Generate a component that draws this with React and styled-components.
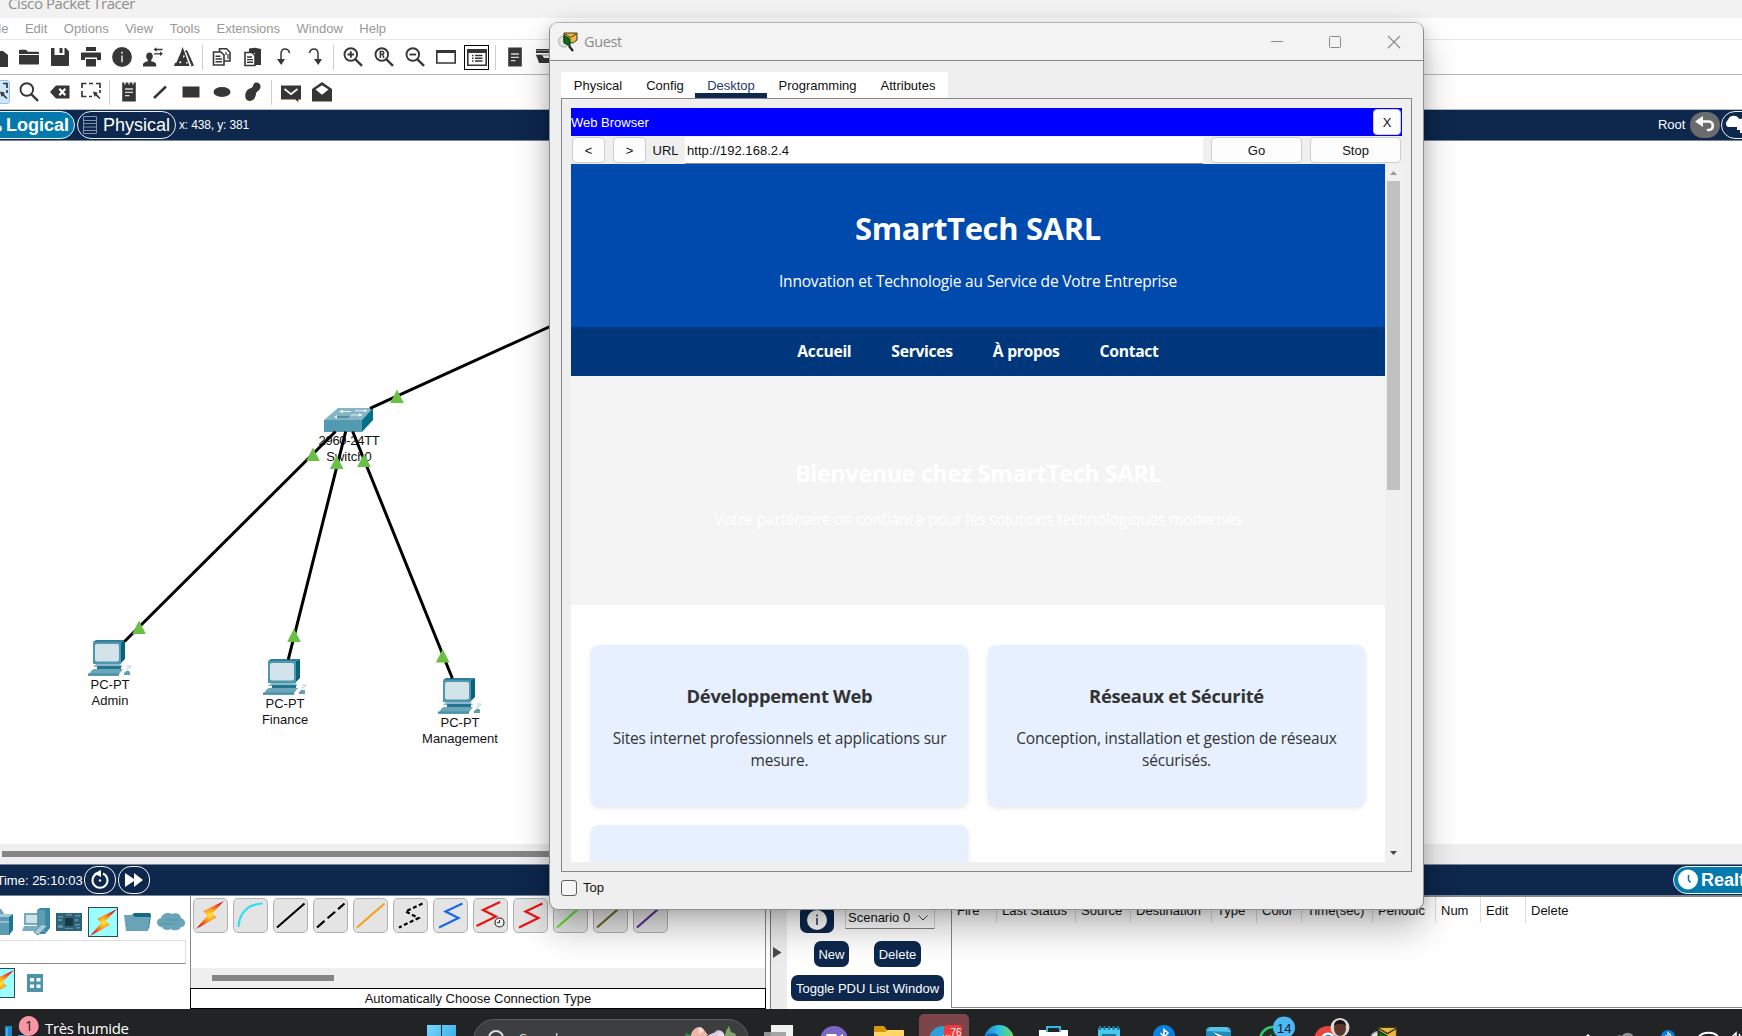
import React from "react";
import styled, { createGlobalStyle } from "styled-components";

const Global = createGlobalStyle`
  * { box-sizing: border-box; }
  html, body { margin: 0; padding: 0; overflow: hidden; background: #fff; }
  svg { display: block; flex: none; overflow: visible; }
`;

const ui = `"Liberation Sans", Arial, sans-serif`;
const segoe = `"Open Sans", "Noto Sans", sans-serif`;
const navy = "#0d274d";

const Desktop = styled.div`
  position: relative;
  width: 1742px;
  height: 1036px;
  overflow: hidden;
  display: flex;
  flex-direction: column;
  font: 13px/16px ${ui};
  color: #111;
  background: #fff;
`;

/* ---------- main window chrome ---------- */
const MainTitle = styled.div`
  height: 18px;
  flex: none;
  padding-left: 8px;
  background: #f2f2f2;
  overflow: hidden;
  font: 15px/7px ${segoe};
  letter-spacing: -0.42px;
  color: #8e8e8e;
  white-space: nowrap;
`;
const MenuBar = styled.div`
  height: 22px;
  flex: none;
  display: flex;
  align-items: center;
  gap: 16.5px;
  padding-top: 1px;
  margin-left: -12.5px;
  border-bottom: 1px solid #e8e8e8;
  color: #989898;
`;
const Strip = styled.div`
  height: 35px;
  flex: none;
  display: flex;
  align-items: center;
  margin-left: -18px;
  border-bottom: 1px solid #b9b9b9;
`;
const Tool = styled.div`
  width: 31px;
  height: 25px;
  flex: none;
  display: flex;
  align-items: center;
  justify-content: center;
  color: #363636;
`;
const Framed = styled.div`
  width: 25px;
  height: 25px;
  border: 1px solid #000;
  display: flex;
  align-items: center;
  justify-content: center;
`;
const Selected = styled.div`
  width: 25px;
  height: 24px;
  border: 1px solid #8fc6ee;
  border-radius: 3px;
  background: #cfe6fb;
  display: flex;
  align-items: center;
  justify-content: center;
`;
const Sep = styled.div`
  width: 4px;
  height: 25px;
  flex: none;
  border-right: 1px solid #cfcfcf;
  margin-right: 3px;
`;
const NavyBar = styled.div`
  height: ${(p) => p.$h}px;
  flex: none;
  display: flex;
  align-items: center;
  justify-content: space-between;
  background: ${navy};
  border-bottom: 1px solid #7b8494;
  color: #fff;
  white-space: nowrap;
`;
const BarGroup = styled.div`
  display: flex;
  align-items: center;
  gap: ${(p) => p.$gap || 2}px;
`;
const ModeTab = styled.div`
  height: 28px;
  width: ${(p) => p.$w}px;
  margin-left: ${(p) => p.$ml || 0}px;
  margin-right: ${(p) => p.$mr || 0}px;
  padding: 0 5px;
  display: flex;
  align-items: center;
  justify-content: ${(p) => p.$align || "flex-end"};
  gap: ${(p) => p.$gap ?? 6}px;
  border: 1px solid #e8f2f8;
  border-radius: 14px;
  background: ${(p) => (p.$on ? "#0379ac" : navy)};
  font-size: 18px;
  font-weight: ${(p) => (p.$on ? 700 : 400)};
  flex: none;
`;
const Coords = styled.span`
  font-size: 12px;
  letter-spacing: -0.15px;
  margin-left: 1px;
`;
const Clock = styled.span`
  margin-left: -3.5px;
  padding-top: 1px;
`;
const RoundBtn = styled.div`
  width: ${(p) => p.$w || 32}px;
  height: ${(p) => p.$h || 28}px;
  border-radius: 13px;
  border: ${(p) => (p.$gray ? "none" : "1px solid #f2f5f8")};
  background: ${(p) => (p.$gray ? "#6c6c6c" : "transparent")};
  display: flex;
  align-items: center;
  justify-content: center;
  flex: none;
`;

/* ---------- topology canvas ---------- */
const Canvas = styled.div`
  position: relative;
  height: 703px;
  flex: none;
  background: #fff;
`;
const Links = styled.svg`
  position: absolute;
  left: 0;
  top: 0;
`;
const Device = styled.div`
  position: absolute;
  left: ${(p) => p.$x}px;
  top: ${(p) => p.$y}px;
  width: 100px;
  display: flex;
  flex-direction: column;
  align-items: center;
  text-align: center;
  white-space: nowrap;
`;
const Model = styled.span`
  margin-top: 1px;
  letter-spacing: ${(p) => p.$ls || 0}px;
`;
const CanvasScroll = styled.div`
  height: 21px;
  flex: none;
  background: #efefef;
  border-bottom: 1px solid #7b8494;
  padding: 7px 0 0 2px;
`;
const Thumb = styled.div`
  width: ${(p) => p.$w}px;
  height: 6px;
  background: #858585;
`;

/* ---------- bottom panels ---------- */
const Bottom = styled.div`
  height: 113px;
  flex: none;
  display: flex;
  background: #fff;
`;
const Categories = styled.div`
  width: 190px;
  display: flex;
  flex-direction: column;
  overflow: hidden;
`;
const CatRow = styled.div`
  display: flex;
  align-items: center;
  height: 30px;
  margin-top: ${(p) => p.$mt}px;
  gap: ${(p) => p.$gap}px;
  margin-left: ${(p) => p.$ml}px;
`;
const Bolt = styled.div`
  width: 30px;
  height: 30px;
  background: #9cffff;
  border: 1px solid #2f4b55;
  display: flex;
  align-items: center;
  justify-content: center;
  flex: none;
`;
const Field = styled.div`
  height: 24px;
  width: 186px;
  margin-top: 3px;
  border: 1px solid #dedede;
  border-left: 0;
  border-bottom-color: #8d8d8d;
`;
const Connections = styled.div`
  width: 576px;
  display: flex;
  flex-direction: column;
  border-left: 1px solid #84878c;
  border-right: 1px solid #84878c;
`;
const ConnRow = styled.div`
  display: flex;
  gap: 5px;
  padding: 2px 0 0 2px;
  height: 72px;
`;
const ConnBtn = styled.div`
  width: 35px;
  height: 35px;
  border: 1px solid #b1b1b1;
  border-radius: 5px;
  background: #e4e4e4;
`;
const ConnScroll = styled.div`
  height: 20px;
  background: #efefef;
  padding: 7px 0 0 21px;
`;
const ConnLabel = styled.div`
  height: 21px;
  margin: 0 -1px;
  padding-top: 1px;
  border: 1px solid #000;
  display: flex;
  align-items: center;
  justify-content: center;
  background: #fff;
`;
const Splitter = styled.div`
  width: 17px;
  margin-left: 4px;
  border-left: 1px solid #77797c;
  background: #ececec;
  display: flex;
  align-items: center;
  padding-left: 2px;
`;
const Pdu = styled.div`
  width: 164px;
  padding: 9px 0 0 4px;
  display: flex;
  flex-direction: column;
`;
const PduRow = styled.div`
  display: flex;
  align-items: center;
  gap: ${(p) => p.$gap}px;
  padding-left: ${(p) => p.$pl}px;
  margin-bottom: 8px;
  height: ${(p) => p.$h || 26}px;
`;
const PduBtn = styled.div`
  width: ${(p) => p.$w}px;
  height: ${(p) => p.$h || 26}px;
  padding-top: 1px;
  border-radius: 7px;
  background: ${navy};
  color: #fff;
  display: flex;
  align-items: center;
  justify-content: center;
  white-space: nowrap;
`;
const Combo = styled.div`
  width: 90px;
  height: 24px;
  margin-top: -4px;
  padding: 2px 6px 0 2px;
  border: 1px solid #d5d5d5;
  border-bottom-color: #858585;
  background: #fff;
  display: flex;
  align-items: center;
  justify-content: space-between;
  white-space: nowrap;
`;
const PduTable = styled.div`
  flex: 1;
  border: 1px solid #84878c;
  border-width: 1px 0 1px 1px;
  margin-bottom: 1px;
  display: flex;
  align-items: flex-start;
`;
const Th = styled.div`
  width: ${(p) => p.$w}px;
  height: 26px;
  padding: 6px 0 0 5px;
  border-right: ${(p) => (p.$last ? 0 : 1)}px solid #dcdcdc;
  white-space: nowrap;
  flex: none;
`;

/* ---------- taskbar ---------- */
const Taskbar = styled.div`
  position: relative;
  z-index: 5;
  height: 27px;
  flex: none;
  overflow: hidden;
  background: #212325;
`;
const TaskRow = styled.div`
  height: 61px;
  display: flex;
  align-items: center;
  color: #fff;
`;
const Weather = styled.div`
  width: 427px;
  height: 61px;
  padding: 10px 0 0 4px;
  display: flex;
  align-items: flex-start;
  font: 15px/19px ${segoe};
  letter-spacing: -0.35px;
`;
const WeatherText = styled.span`
  margin-left: 6px;
`;
const SearchPill = styled.div`
  width: 276px;
  height: 42px;
  margin: 0 2px 0 17px;
  padding: 0 10px 0 14px;
  border-radius: 21px;
  background: #3c3e40;
  border: 1px solid #5b5d5f;
  display: flex;
  align-items: center;
  font: 15px/20px ${segoe};
  letter-spacing: -0.5px;
  color: #d5d5d5;
`;
const SearchText = styled.span`
  flex: 1;
  margin: -4px 0 0 15px;
`;
const Slot = styled.div`
  width: 55px;
  display: flex;
  justify-content: center;
  flex: none;
`;
const ActiveSlot = styled.div`
  width: 50px;
  height: 51px;
  border-radius: 5px;
  background: #7c454a;
  display: flex;
  align-items: center;
  justify-content: center;
`;
const Tray = styled.div`
  width: 160px;
  margin-left: auto;
  display: flex;
  align-items: center;
`;

/* ---------- guest window ---------- */
const Win = styled.div`
  position: absolute;
  left: 549px;
  top: 22px;
  width: 875px;
  height: 888px;
  border: 1px solid #8b8d90;
  border-top-color: #b4b4b4;
  border-radius: 9px;
  background: #efefef;
  display: flex;
  flex-direction: column;
  box-shadow: 0 18px 36px rgba(0, 0, 0, 0.27), 0 2px 14px rgba(0, 0, 0, 0.15);
`;
const WinTitle = styled.div`
  height: 38px;
  flex: none;
  display: flex;
  align-items: center;
  padding: 0 23px 0 8px;
  border-radius: 8px 8px 0 0;
  background: #f3f3f3;
  border-bottom: 1px solid #84878c;
`;
const WinName = styled.div`
  flex: 1;
  margin-left: 6px;
  font: 14.5px/20px ${segoe};
  letter-spacing: -0.35px;
  color: #8c8c8c;
`;
const Controls = styled.div`
  display: flex;
  gap: 46px;
  svg:last-child { margin-left: 1px; }
`;
const WinBody = styled.div`
  flex: 1;
  padding: 11px 11px 0;
`;
const Tabs = styled.div`
  display: flex;
  width: 387px;
  height: 26px;
  background: #fff;
`;
const Tab = styled.div`
  width: ${(p) => p.$w}px;
  padding-top: 6px;
  text-align: center;
  color: ${(p) => (p.$on ? "#1e3a68" : "#111")};
  box-shadow: ${(p) => (p.$on ? `inset 0 -5px ${navy}` : "none")};
`;
const Frame = styled.div`
  width: 851px;
  height: 774px;
  border: 1px solid #84878c;
  padding: 9px;
`;
const BrowserTitle = styled.div`
  height: 28px;
  background: #0000fe;
  color: #fff;
  display: flex;
  align-items: center;
  justify-content: space-between;
  padding-right: 1px;
`;
const BrowserName = styled.span`
  padding-top: 1px;
`;
const AddressBar = styled.div`
  height: 28px;
  display: flex;
  align-items: center;
  padding: 0 1px;
`;
const Btn = styled.div`
  width: ${(p) => p.$w}px;
  height: 26px;
  padding-top: 1px;
  margin-left: ${(p) => p.$ml || 0}px;
  border: 1px solid #cdcdcd;
  border-radius: 4px;
  background: #fdfdfd;
  color: #111;
  display: flex;
  align-items: center;
  justify-content: center;
`;
const UrlLabel = styled.span`
  width: 39px;
  padding: 1px 0 0 6.5px;
`;
const UrlInput = styled.div`
  width: 518px;
  height: 27px;
  margin-top: 1px;
  padding: 5.5px 0 0 2px;
  background: #fff;
  border-bottom: 1px solid #8a8a8a;
  letter-spacing: 0.05px;
`;
const Viewport = styled.div`
  height: 698px;
  display: flex;
`;
const Page = styled.div`
  width: 814px;
  overflow: hidden;
  background: #fff;
  font: 15.5px/21.28px ${segoe};
  color: #333;
  text-align: center;
`;
const ScrollBar = styled.div`
  width: 17px;
  display: flex;
  flex-direction: column;
  align-items: center;
  justify-content: space-between;
  padding: 7px 0 7px;
  background: #f0f0f0;
`;
const ScrollTop = styled.div`
  display: flex;
  flex-direction: column;
  align-items: center;
  gap: 6px;
`;
const ScrollThumb = styled.div`
  width: 13px;
  height: 309px;
  background: #c1c1c1;
`;
const Hero = styled.header`
  height: 163px;
  padding: 43.4px 0 0;
  background: #004aad;
  color: #fff;
`;
const H1 = styled.h1`
  margin: 0 0 21px;
  font: 700 30.9px/42.6px ${segoe};
  letter-spacing: -0.3px;
`;
const P = styled.p`
  margin: 0;
  letter-spacing: -0.18px;
`;
const Nav = styled.nav`
  height: 49px;
  padding-top: 1px;
  display: flex;
  align-items: center;
  justify-content: center;
  gap: 40px;
  background: #00367c;
  color: #fff;
  font-weight: 700;
  font-size: 15.7px;
  letter-spacing: -0.3px;
`;
const Welcome = styled.section`
  height: 229px;
  padding-top: 82px;
  background: #f4f4f4;
  color: #fff;
`;
const H2 = styled.h2`
  margin: 0 0 19.5px;
  font: 700 23.4px/31.9px ${segoe};
  letter-spacing: -0.4px;
`;
const Cards = styled.section`
  padding: 40px 20px;
  display: grid;
  grid-template-columns: 1fr 1fr;
  gap: 19px 20px;
`;
const Card = styled.article`
  height: 161px;
  padding: 38.5px 0 0;
  border-radius: 8px;
  background: #e6f0ff;
  box-shadow: 0 2px 5px rgba(0, 0, 0, 0.1);
`;
const H3 = styled.h3`
  margin: 0 0 20px;
  font: 700 18.4px/24.9px ${segoe};
  letter-spacing: -0.3px;
`;
const Footer = styled.label`
  display: flex;
  align-items: center;
  gap: 6px;
  margin-top: 8px;
`;
const Check = styled.span`
  width: 16px;
  height: 16px;
  border: 1px solid #5f5f5f;
  border-radius: 3px;
  background: #f5f5f5;
`;

/* ---------- icons ---------- */
const I = ({ children, w = 20, h = 20, vb }) => (
  <svg width={w} height={h} viewBox={vb || `0 0 ${w} ${h}`} fill="currentColor" stroke="none">{children}</svg>
);
const Folder = () => <I><path d="M0 4c0-.8.400-1.300 1-1.300h6l2 2h10c.6 0 1 .4 1 1V7H0zM0 8h20v8.500c0 .6-.400 1-1 1H1c-.6 0-1-.400-1-1z" /></I>;
const Floppy = () => <I><path fillRule="evenodd" d="M1 1h3.500v7h10V1H16l3 3.500V18c0 .6-.4 1-1 1H2c-.6 0-1-.4-1-1zM9.500 1h3v5h-3z" /></I>;
const Printer = () => <I><path d="M5 0h10v4H5zM1 5.500h18c.5 0 1 .3 1 .8V13h-4v-2.500H4V13H0V6.300c0-.5.500-.8 1-.8zM5 12h10v7.500H5z" /></I>;
const Info = () => <I><circle cx="10" cy="10" r="9.900" /><path d="M9 4.800h2v2H9zM9 8.500h2v6.700H9z" fill="#bbb" /></I>;
const User = () => <I><path d="M6.500 5.500c2.200 0 3.300 1.500 3.300 3.700 0 1.600-.7 2.800-1.600 3.500v1.500c3 .6 5 1.700 5 3.300V19.500H0v-2c0-1.600 2-2.700 4.800-3.300v-1.500c-.9-.7-1.600-1.900-1.600-3.500 0-2.200 1.100-3.700 3.300-3.700zM10.500 2.500l3-2.300v1.600h6v1.400h-6v1.500zM20 6.800l-3 2.300V7.600h-6V6.200h6V4.600z" /></I>;
const Prism = () => <I><path d="M8.500 0l2 5 5 14H0l1-3 1.500-.5L7 5z" /><path d="M11 4l2-1 7 15.500-3 1z" /><path d="M5 15l1.500-1 1 1.500-1.500 1zM9 9l1-1 .8 1.300L9.500 11zM12 15h1.500v1.500H12z" fill="#fff" /><path d="M11.500 5l5.500 14" stroke="#fff" strokeWidth="1" /></I>;
const Copy = () => <I><g fill="#fff" stroke="#363636" strokeWidth="1.600"><path d="M7.500 1.800h7l3.500 3.500V14H7.500z" /><path d="M1.500 5H9l3 3v10H1.500z" /></g><path d="M3.500 9.300h5M3.500 12h6.500M3.500 14.700h6.500" stroke="#363636" strokeWidth="1.400" /><path d="M14 5v3M16 7v5" stroke="#363636" strokeWidth="1.200" /></I>;
const Paste = () => <I><path d="M6 1.500l6-.8 6 1.300V18h-6V6H6z" /><path d="M2 5.500h7l3 3v10H2z" fill="#fff" stroke="#363636" strokeWidth="1.600" /><path d="M4 10h5M4 12.600h6M4 15.200h6" stroke="#363636" strokeWidth="1.400" /></I>;
const Undo = () => <I><path d="M7 13V7c0-3 1.500-5 4-5s4 1.500 4.500 4" fill="none" stroke="#363636" strokeWidth="1.500" /><path d="M3 12h8l-3.800 6z" /></I>;
const Redo = () => <I><path d="M13 13V7c0-3-1.500-5-4-5S5 3.500 4.500 6" fill="none" stroke="#363636" strokeWidth="1.500" /><path d="M9 12h8l-3.800 6z" /></I>;
const Mag = ({ children, r = 6.300 }) => <I><g fill="none" stroke="#363636" strokeWidth="1.900"><circle cx="7.800" cy="7.500" r={r} /><path d="M12.200 12.200l6.800 6.600" strokeWidth="2.300" />{children}</g></I>;
const RectIcon = () => <I><path d="M.8 4h18.400v12H.8z" fill="none" stroke="#363636" strokeWidth="1.600" /><path d="M0 3h20v3H0z" /></I>;
const ListIcon = () => <I w={20} h={17}><path d="M.8.8h18.400v15.400H.8z" fill="#fff" stroke="#363636" strokeWidth="1.600" /><path d="M.5.500h19v3.500H.5z" /><path d="M5 6.500h1.500M8 6.500h7.500M5 9.200h1.500M8 9.200h7.500M5 12h1.500M8 12h7.500" stroke="#363636" strokeWidth="1.600" /></I>;
const Doc = ({ holes }) => <I><path d="M3.200.5h13.600v19H3.200z" /><path d="M6 7h8M6 10.300h8M6 13.600h4.500" stroke="#d8d8d8" strokeWidth="1.300" />{holes && <path d="M6 0v2.500M10 0v2.500M14 0v2.500" stroke="#fff" strokeWidth="1.200" />}</I>;
const Server = () => <I><path d="M0 2h20v4H0z" /><path d="M0 3.500h20M0 8h20" stroke="#888" /><path d="M0 8h6l2 3h12v5H3l-1-3z" /></I>;
const DashSel = () => <I><path d="M1 6V1.500h4.500M8 1.500h4M15 1.500h4V6M1 9v5.500h4.500M8 14.500h3M19 8v3" fill="none" stroke="#363636" strokeWidth="1.700" /><path d="M12 9.500l5 1.300-1.300 1.200L19.500 16l-1 1-4-3.500-1 1.500z" /></I>;
const Backspace = () => <I><path d="M6 3.500h13.500v13H6L0 10z" /><path d="M9.300 6.800l6 6.400M15.300 6.800l-6 6.400" stroke="#fff" strokeWidth="2.200" /></I>;
const LineIcon = () => <I><path d="M4 16L16 4.500" stroke="#363636" strokeWidth="2.500" /></I>;
const RectFill = () => <I><path d="M1.500 4.500h17v11h-17z" /></I>;
const Oval = () => <I><ellipse cx="10" cy="10" rx="8.500" ry="5" /></I>;
const Blob = () => <I><path d="M12 .8c2.500-1 6 1 5.500 4.400-.3 2.200-2.200 3.300-3.500 4.600-1.500 1.500-.8 4-2.500 6.500-2 3-6.500 3.500-8.300 1C1.500 15 2 10 5 7.500c1.500-1.300 3.500-1 4.500-2.500s.8-3.400 2.500-4.200z" /></I>;
const Mail = () => <I><path d="M0 3.500h20v14h-2.700v2.700l-3-2.700H0z" /><path d="M3.500 7l6.500 5.200L16.500 7" fill="none" stroke="#fff" strokeWidth="1.700" /></I>;
const MailOpen = () => <I><path d="M0 7l10-7 10 7v12.500H0z" /><path d="M3.500 7.500L10 3.200l6.500 4.300-6.500 5.300z" fill="#fff" /></I>;

const Tri = ({ x, y }) => <path d={`M${x} ${y}l6.800 13.400h-13.600z`} fill="#6abf45" />;
const PC = () => (
  <svg width="44" height="36" viewBox="0 0 44 36">
    <path d="M5 2l3-2h29l-4 2z" fill="#2f7f98" /><path d="M33 2l4-2v19l-4 4z" fill="#06637e" />
    <path d="M5 2h28v22H5z" fill="#4f97ae" /><rect x="7" y="4" width="24" height="17.500" rx="2" fill="#d2e3ea" />
    <path d="M8 24h24l3 3H5z" fill="#8fbac9" /><path d="M9 26h24v3.500H9z" fill="#23758e" />
    <path d="M4 30l2-1h29l-5 6.500H0z" fill="#6ca6b9" /><path d="M0 33.500h31v2.300H0z" fill="#4a90a8" />
    <path d="M36 33l3-2.500 3 1v3.500h-6z" fill="#5f9fb4" /><path d="M38 29c4-1 5-2 5-3h-4" fill="none" stroke="#9fc3cf" strokeWidth=".8" />
  </svg>
);
const Switch = () => (
  <svg width="50" height="24" viewBox="0 0 50 24">
    <path d="M0 12L14 0h35L38 12z" fill="#86b5c5" /><path d="M38 12L49 0v12L38 24z" fill="#06708c" /><path d="M0 12h38v12H0z" fill="#529ab1" />
    <path d="M17 3.500h10M31 2.800h10M27 7h10" stroke="#e8f3f7" /><path d="M19 1.800l-4 1.700 4 1.600zM40 1.300l3.500 1.500-3.500 1.500zM13 7.300l-3 1.700 3 1.500zM35 5.300l3.500 1.700L35 8.500z" fill="#fff" /><path d="M13 9h12" stroke="#1f6d87" />
  </svg>
);
const BoltShape = ({ w = 28 }) => (
  <svg width={w} height={w} viewBox="0 0 28 28">
    <defs>
      <radialGradient id="bolt" cx="50%" cy="50%" r="55%"><stop offset="0" stopColor="#ffee33" /><stop offset=".45" stopColor="#ff8a1c" /><stop offset="1" stopColor="#e0141c" /></radialGradient>
    </defs>
    <path d="M28 0L7.500 10l4 4.500L0 28l20.500-11.500-4.500-4z" fill="url(#bolt)" />
  </svg>
);
const PtIcon = ({ s = 20 }) => (
  <svg width={s} height={s} viewBox="0 0 20 20">
    <circle cx="6" cy="9.500" r="5.500" fill="#dfe4df" stroke="#a6aaa6" /><path d="M6 1h13v7l-4 3-9-1z" fill="#e8b649" stroke="#46390e" /><path d="M6 1.500l6.500 4L19 1.500" fill="none" stroke="#46390e" /><path d="M6 3.500l6 3.500v7l-6-3z" fill="#0d6a1d" stroke="#053b0d" /><path d="M11 14l4 5" stroke="#222" strokeWidth="2.200" />
  </svg>
);
const Zig = ({ color, dash, dx = 0, dy = 0 }) => <path d={`M${28.5 + dx} ${4.5 + dy}L${11.5 + dx} ${12.5 + dy}L${24.5 + dx} ${19 + dy}L${5 + dx} ${28.5 + dy}`} fill="none" stroke={color} strokeWidth="2.200" strokeDasharray={dash} />;
const Diag = ({ color, dash }) => <path d="M3 28.500L30.500 4.500" stroke={color} strokeWidth="2.200" strokeDasharray={dash} />;

const connections = [
  <g transform="translate(2 2)"><BoltShape /></g>,
  <path d="M4.500 28C5 14 14 5 28.500 4.500" fill="none" stroke="#2be0f0" strokeWidth="2.200" />,
  <Diag color="#000" />,
  <Diag color="#000" dash="10 4" />,
  <Diag color="#f7a01c" />,
  <Zig color="#000" dash="4 2.500" />,
  <Zig color="#1768f0" />,
  <g><Zig color="#ee1111" dx={-2.5} dy={-1.5} /><circle cx="25.500" cy="23.500" r="4.500" fill="#f2f2f2" stroke="#222" strokeWidth="1.100" /><path d="M25.500 21v2.700h-2.500" fill="none" stroke="#222" /></g>,
  <Zig color="#ee1111" />,
  <Diag color="#5ce02d" />,
  <Diag color="#6a6a1d" />,
  <Diag color="#5c2d91" />,
];

const columns = [["Fire", 45], ["Last Status", 79], ["Source", 55], ["Destination", 81], ["Type", 45], ["Color", 45], ["Time(sec)", 71], ["Periodic", 63], ["Num", 45], ["Edit", 45], ["Delete", 60]];
const pcs = [["Admin", 60, 499], ["Finance", 235, 518], ["Management", 410, 537]];
const BtGlyph = () => <path d="M-3.500 -4L4 4L0 7.500V-7.500L4 -4L-3.500 4" fill="none" stroke="#fff" strokeWidth="1.500" />;

export default function App() {
  return (
    <Desktop>
      <Global />
      <MainTitle>Cisco Packet Tracer</MainTitle>
      <MenuBar>
        {["File", "Edit", "Options", "View", "Tools", "Extensions", "Window", "Help"].map((m) => <span key={m}>{m}</span>)}
      </MenuBar>
      <Strip>
        <Tool><I><path d="M3 4h12l5 4v12H3z" /></I></Tool>
        <Tool><Folder /></Tool><Tool><Floppy /></Tool><Tool><Printer /></Tool><Tool><Info /></Tool><Tool><User /></Tool><Tool><Prism /></Tool>
        <Sep />
        <Tool><Copy /></Tool><Tool><Paste /></Tool><Tool><Undo /></Tool><Tool><Redo /></Tool>
        <Sep />
        <Tool><Mag><path d="M4.500 7.500h6.600M7.800 4.200v6.600" /></Mag></Tool>
        <Tool><Mag><path d="M6.300 11V4.500h2c2 0 2 2.800 0 2.800h-2M8.300 7.500l1.700 3.300" strokeWidth="1.500" /></Mag></Tool>
        <Tool><Mag><path d="M4.500 7.500h6.600" /></Mag></Tool>
        <Tool><RectIcon /></Tool>
        <Tool><Framed><ListIcon /></Framed></Tool>
        <Sep />
        <Tool><Doc /></Tool><Tool><Server /></Tool>
      </Strip>
      <Strip>
        <Tool><Selected><DashSel /></Selected></Tool>
        <Tool><Mag /></Tool><Tool><Backspace /></Tool><Tool><DashSel /></Tool>
        <Sep />
        <Tool><Doc holes /></Tool><Tool><LineIcon /></Tool><Tool><RectFill /></Tool><Tool><Oval /></Tool><Tool><Blob /></Tool>
        <Sep />
        <Tool><Mail /></Tool><Tool><MailOpen /></Tool>
      </Strip>
      <NavyBar $h={31}>
        <BarGroup>
          <ModeTab $on $w={95} $ml={-20} $gap={3}><svg width="8" height="12" viewBox="0 0 8 12"><circle cx="4" cy="9.500" r="3" fill="#fff" /></svg>Logical</ModeTab>
          <ModeTab $w={99}>
            <svg width="14" height="18" viewBox="0 0 14 18"><path d="M.5.500h13v17H.5zM.5 4.500h13M.5 7.500h13M.5 11h13M.5 14.500h13" fill="none" stroke="#7f92b3" /></svg>Physical
          </ModeTab>
          <Coords>x: 438, y: 381</Coords>
        </BarGroup>
        <BarGroup $gap={1}>
          <span>Root&nbsp;</span>
          <RoundBtn $gray $w={30} $h={26}><svg width="20" height="18" viewBox="0 0 20 18"><path d="M6 5.500h8c5 0 5 8.500 0 8.500h-1" fill="none" stroke="#fff" strokeWidth="2.600" strokeLinecap="round" /><path d="M0 5.500L8 0v11z" fill="#fff" /></svg></RoundBtn>
          <ModeTab $w={40} $mr={-19} $align="flex-start"><svg width="26" height="20" viewBox="3 0 26 20"><path d="M4 12a4 4 0 0 1 0-7C5 0 13-1 15 4c5-1 8 3 6 8zM13 11h7v7h-4v-3h-3z" fill="#fff" /></svg></ModeTab>
        </BarGroup>
      </NavyBar>

      <Canvas>
        {pcs.map(([n, x, y]) => (
          <Device key={n} $x={x} $y={y}>
            <PC /><Model>PC-PT</Model><span>{n}</span>
          </Device>
        ))}
        <Device $x={299} $y={267}>
          <Switch /><Model $ls={-0.3}>2960-24TT</Model><span>Switch0</span>
        </Device>
        <Links width="600" height="703" viewBox="0 141 600 703">
          <g stroke="#000" strokeWidth="3">
            <path d="M370 408.300L560 322M335.500 431.500L124.500 641.500M345.700 431.500L288.300 659.300M352.700 431.500L452.300 678.300" fill="none" />
          </g>
          <Tri x={397} y={389.5} /><Tri x={313} y={447.5} /><Tri x={336.7} y={455.5} /><Tri x={364} y={453.5} /><Tri x={139} y={620.5} /><Tri x={294} y={628.5} /><Tri x={442.7} y={649} />
        </Links>
      </Canvas>
      <CanvasScroll><Thumb $w={900} /></CanvasScroll>
      <NavyBar $h={31}>
        <BarGroup $gap={1.5}>
          <Clock>Time: 25:10:03</Clock>
          <RoundBtn><svg width="20" height="20" viewBox="0 0 20 20"><path d="M7 3.500a7.500 7.500 0 1 0 6 0" fill="none" stroke="#fff" strokeWidth="2" /><path d="M4 3.500L11 0v7z" fill="#fff" /><circle cx="10" cy="10.500" r="1.200" fill="#fff" /></svg></RoundBtn>
          <RoundBtn><svg width="18" height="14" viewBox="0 0 18 14"><path d="M0 0l9 6V0l9 7-9 7V8l-9 6z" fill="#fff" /></svg></RoundBtn>
        </BarGroup>
        <ModeTab $on $w={112} $align="flex-start" $gap={2} $mr={-43}>
          <svg width="20" height="20" viewBox="0 0 20 20"><circle cx="9" cy="9.500" r="10" fill="#fff" /><path d="M9.500 5v5l2 2.500" fill="none" stroke="#0379ac" strokeWidth="1.500" /></svg>Realtime
        </ModeTab>
      </NavyBar>

      <Bottom>
        <Categories>
          <CatRow $mt={11} $gap={6} $ml={-12}>
            <svg width="28" height="26" viewBox="0 0 28 26"><path d="M6 0h7l4 6v14H6z" fill="#69a5b9" /><path d="M0 8l3-3h22l-4 3z" fill="#a5c9d5" /><path d="M0 8h22v18H0z" fill="#5b9cb2" /><path d="M21 8l4-3v16l-4 5z" fill="#1f7490" /><path d="M0 13h21" stroke="#cfe2e9" /></svg>
            <svg width="28" height="28" viewBox="0 0 28 28"><path d="M15 2l3-2h10v20l-5 6h-8z" fill="#3c88a2" /><path d="M15 2h8v22h-8z" fill="#5f9fb4" /><path d="M3 6h13v10H3z" fill="#cfe2e9" stroke="#4b93ab" strokeWidth="1.500" /><path d="M2 18h15l2 5H0z" fill="#79aec0" /><path d="M12 24l8-8 5 2-9 9z" fill="#a9cbd6" stroke="#4b93ab" /></svg>
            <svg width="26" height="20" viewBox="0 0 26 20"><path d="M0 1h26v18H0z" fill="#2c6376" /><path d="M9 6h8v8H9z" fill="#1b3640" /><path d="M2 4h5v1.500H2zM2 7h4v2H2zM19 3h5v1.500h-5zM19 7h3v2h-3zM2 13h5v3H2zM19 12h5v1.500h-5zM20 15h4v1.500h-4zM10 2h6v1.500h-6zM9 16h8v1H9z" fill="#5d93a6" /></svg>
            <Bolt><BoltShape w={27} /></Bolt>
            <svg width="27" height="20" viewBox="0 0 27 20"><path d="M8 3l2-2h16l1 2-2 14z" fill="#146a84" /><path d="M0 3h9l2 2h15l-2 14H2z" fill="#68a3b7" /></svg>
            <svg width="28" height="20" viewBox="0 0 28 20"><path d="M5 15c-6 0-7-8-1-9C5 1 12 0 15 2c5-2 9 1 9 4 6 2 5 9 0 9-1 4-8 4-10 2-3 2-8 1-9-2z" fill="#6aa4b8" /><path d="M3 12h14M10 8h12" stroke="#4f92aa" /></svg>
          </CatRow>
          <Field />
          <CatRow $mt={4} $gap={12} $ml={-15}>
            <Bolt><BoltShape w={27} /></Bolt>
            <svg width="16" height="18" viewBox="0 0 16 18"><path d="M0 0h16v18H0z" fill="#4c93ac" /><path d="M3 4h4v3.500H3zM9.500 4h4v3.500h-4zM3 10.500h4V14H3zM9.500 10.500h4V14h-4z" fill="#fff" /></svg>
          </CatRow>
        </Categories>
        <Connections>
          <ConnRow>
            {connections.map((c, i) => <ConnBtn key={i}><svg width="33" height="33" viewBox="0 0 33 33">{c}</svg></ConnBtn>)}
          </ConnRow>
          <ConnScroll><Thumb $w={122} /></ConnScroll>
          <ConnLabel>Automatically Choose Connection Type</ConnLabel>
        </Connections>
        <Splitter><svg width="9" height="11" viewBox="0 0 9 11"><path d="M0 0l8.500 5.500L0 11z" fill="#4a4a4a" /></svg></Splitter>
        <Pdu>
          <PduRow $h={28} $gap={11} $pl={9}>
            <PduBtn $w={34} $h={28}><svg width="20" height="20" viewBox="0 0 20 20"><circle cx="10" cy="10" r="10" fill="#fff" /><path d="M9 4.500h2v2H9zM9 8h2v7H9z" fill="#55657f" /></svg></PduBtn>
            <Combo>Scenario 0<svg width="10" height="6" viewBox="0 0 10 6"><path d="M.5.500L5 5 9.500.500" fill="none" stroke="#444" /></svg></Combo>
          </PduRow>
          <PduRow $gap={25} $pl={23}><PduBtn $w={35}>New</PduBtn><PduBtn $w={47}>Delete</PduBtn></PduRow>
          <PduRow $pl={0}><PduBtn $w={153}>Toggle PDU List Window</PduBtn></PduRow>
        </Pdu>
        <PduTable>
          {columns.map(([c, w], i) => <Th key={c} $w={w} $last={i === columns.length - 1}>{c}</Th>)}
        </PduTable>
      </Bottom>

      <Taskbar>
        <TaskRow>
          <Weather>
            <svg width="35" height="28" viewBox="0 0 35 28"><path d="M1 7h7v22H1z" fill="#2187c9" /><path d="M2 9h2v20H2z" fill="#34b3ee" /><path d="M14 16h10l4 12H14z" fill="#2e9ad8" /><circle cx="24.700" cy="7" r="10" fill="#fa96a3" /><text x="21" y="12" fontSize="14" fill="#222">1</text></svg>
            <WeatherText>Très humide</WeatherText>
          </Weather>
          <svg width="29" height="29" viewBox="0 0 29 29"><defs><linearGradient id="win" x2="1" y2="1"><stop offset="0" stopColor="#7bd8fb" /><stop offset="1" stopColor="#1a9fe8" /></linearGradient></defs><path d="M0 0h14v14H0zM15 0h14v14H15zM0 15h14v14H0zM15 15h14v14H15z" fill="url(#win)" /></svg>
          <SearchPill>
            <svg width="16" height="20" viewBox="0 0 16 20"><circle cx="8" cy="8" r="7" fill="none" stroke="#ddd" strokeWidth="2" /></svg>
            <SearchText>Search</SearchText>
            <svg width="54" height="32" viewBox="0 0 54 32"><path d="M0 14l2-5 5 2 1-3 3 6zM12 12h10v4H12z" fill="#2f8a45" /><path d="M8 8c3-6 9-6 12-2l4 5-6 5-12-2z" fill="#efb4a4" /><path d="M14 4c3-2 5 0 6 3l-5 3z" fill="#f8dccb" /><path d="M24 12c2-3 6-2 8-5 3-2 7 0 8 3l4 10H20z" fill="#dccbdf" /><path d="M34 9c3-2 6 1 7 4l-6 3z" fill="#efdce4" /><path d="M41 12l1-5 3-5 2 6 5 2-2 6h-8z" fill="#7fa46a" /></svg>
          </SearchPill>
          <Slot><svg width="30" height="29" viewBox="0 0 30 29"><path d="M7 0h22v14H7z" fill="#f0f0f0" /><path d="M0 7h22v14H0z" fill="#9c9c9c" fillOpacity=".9" /></svg></Slot>
          <Slot><svg width="28" height="28" viewBox="0 0 28 28"><circle cx="14" cy="14" r="14" fill="#7a68c4" /><rect x="6" y="8" width="11" height="10" rx="2" fill="#fff" /><path d="M18 11l5-3v10l-5-3z" fill="#fff" /></svg></Slot>
          <Slot><svg width="30" height="27" viewBox="0 0 30 27"><path d="M0 1c0-.6.400-1 1-1h9l3 4h16v6H0z" fill="#d9970f" /><path d="M0 6h11l3-2h15c.6 0 1 .4 1 1v22H0z" fill="#ffd766" /></svg></Slot>
          <Slot><ActiveSlot><svg width="30" height="27" viewBox="0 0 30 27"><circle cx="14" cy="14" r="14" fill="#2d9fd9" /><path d="M4 14l18-8-3 16z" fill="#fff" /><rect x="15" y="-1" width="18" height="15" rx="4" fill="#ee3a3a" /><text x="16" y="10" fontSize="10" fill="#fff">..76</text></svg></ActiveSlot></Slot>
          <Slot><svg width="30" height="30" viewBox="0 0 30 30"><defs><linearGradient id="edge" x2="1"><stop offset="0" stopColor="#1a7fd4" /><stop offset=".5" stopColor="#31c1e0" /><stop offset="1" stopColor="#6cdb4e" /></linearGradient></defs><circle cx="15" cy="15" r="15" fill="url(#edge)" /><path d="M0 15c1-9 16-9 17 0z" fill="#1266b4" /></svg></Slot>
          <Slot><svg width="29" height="28" viewBox="0 0 29 28"><path d="M8 6V1h13v5" fill="none" stroke="#35b6dc" strokeWidth="2" /><path d="M0 4h7v2h15V4h7v24H0z" fill="#fff" /></svg></Slot>
          <Slot><svg width="22" height="28" viewBox="0 0 22 28"><rect y="2" width="22" height="26" rx="2" fill="#4cc6ea" /><path d="M2 0v4M6.500 0v4M11 0v4M15.500 0v4M20 0v4" stroke="#1583a8" strokeWidth="2" /><path d="M4 9h14" stroke="#0b5c83" strokeWidth="1.500" /></svg></Slot>
          <Slot><svg width="22" height="30" viewBox="0 0 22 30"><rect width="22" height="30" rx="11" fill="#0a7fe0" /><g transform="translate(11 12)"><BtGlyph /></g></svg></Slot>
          <Slot><svg width="25" height="26" viewBox="0 0 25 26"><rect width="25" height="26" rx="4" fill="#2489b8" /><path d="M0 4l4-4h17l4 5z" fill="#56c3e6" /><path d="M7 5l12 5-2 3z" fill="#fff" /></svg></Slot>
          <Slot><svg width="32" height="28" viewBox="0 0 32 28"><circle cx="15" cy="14" r="13" fill="#1c3325" stroke="#30cf6a" strokeWidth="2.500" /><path d="M9 14l4-6 3 8" fill="#30cf6a" /><circle cx="26" cy="1.500" r="11" fill="#4cb8f4" /><text x="19" y="6.500" fontSize="13" fill="#10202c">14</text></svg></Slot>
          <Slot><svg width="30" height="28" viewBox="0 0 30 28"><circle cx="14" cy="14" r="14" fill="#e5453b" /><circle cx="14" cy="14" r="6.500" fill="#4b8bf4" stroke="#fff" strokeWidth="2" /><circle cx="26" cy="1.500" r="9.500" fill="#d9d6d4" /><ellipse cx="26" cy="2.500" rx="6" ry="7.500" fill="#5b3628" /><path d="M20 0c0-8 12-8 12 0-3-3-9-3-12 0z" fill="#1b1412" /></svg></Slot>
          <Slot><PtIcon s={28} /></Slot>
          <Tray>
            <svg width="160" height="20" viewBox="0 0 160 20">
              <path d="M2 9l4-4 4 4" fill="none" stroke="#fff" strokeWidth="1.500" />
              <path d="M34 12c-2-6 4-8 6-6 3-5 11-4 12 2v6z" fill="#8e8e8e" />
              <circle cx="86" cy="7" r="7" fill="#0a7fe0" /><g transform="translate(86 8) scale(.7)"><BtGlyph /></g>
              <path d="M116 8c4-7 17-7 21 0M120 11c3-4 10-4 13 0" fill="none" stroke="#fff" strokeWidth="1.800" />
              <path d="M146 8h3l5-5v14l-5-4h-3zM157 4c2 3 2 6 0 9" fill="none" stroke="#fff" strokeWidth="1.500" />
            </svg>
          </Tray>
        </TaskRow>
      </Taskbar>

      <Win>
        <WinTitle>
          <PtIcon s={20} />
          <WinName>Guest</WinName>
          <Controls>
            <svg width="12" height="12" viewBox="0 0 12 12"><path d="M0 5.500h12" stroke="#8a8a8a" /></svg>
            <svg width="12" height="12" viewBox="0 0 12 12"><rect x=".5" y=".5" width="11" height="11" rx="1" fill="none" stroke="#8a8a8a" /></svg>
            <svg width="12" height="12" viewBox="0 0 12 12"><path d="M0 0l12 12M12 0L0 12" stroke="#8a8a8a" strokeWidth="1.100" /></svg>
          </Controls>
        </WinTitle>
        <WinBody>
          <Tabs>
            <Tab $w={74}>Physical</Tab><Tab $w={60}>Config</Tab><Tab $w={72} $on>Desktop</Tab><Tab $w={101}>Programming</Tab><Tab $w={80}>Attributes</Tab>
          </Tabs>
          <Frame>
            <BrowserTitle><BrowserName>Web Browser</BrowserName><Btn $w={28}>X</Btn></BrowserTitle>
            <AddressBar>
              <Btn $w={33}>&lt;</Btn><Btn $w={33} $ml={8}>&gt;</Btn>
              <UrlLabel>URL</UrlLabel>
              <UrlInput>http://192.168.2.4</UrlInput>
              <Btn $w={91} $ml={8}>Go</Btn><Btn $w={91} $ml={8}>Stop</Btn>
            </AddressBar>
            <Viewport>
              <Page>
                <Hero><H1>SmartTech SARL</H1><P>Innovation et Technologie au Service de Votre Entreprise</P></Hero>
                <Nav><span>Accueil</span><span>Services</span><span>À propos</span><span>Contact</span></Nav>
                <Welcome><H2>Bienvenue chez SmartTech SARL</H2><P>Votre partenaire de confiance pour les solutions technologiques modernes</P></Welcome>
                <Cards>
                  <Card><H3>Développement Web</H3><P>Sites internet professionnels et applications sur<br />mesure.</P></Card>
                  <Card><H3>Réseaux et Sécurité</H3><P>Conception, installation et gestion de réseaux<br />sécurisés.</P></Card>
                  <Card />
                </Cards>
              </Page>
              <ScrollBar>
                <ScrollTop>
                  <svg width="7" height="4" viewBox="0 0 7 4"><path d="M0 4L3.500 0 7 4z" fill="#9a9a9a" /></svg>
                  <ScrollThumb />
                </ScrollTop>
                <svg width="7" height="4" viewBox="0 0 7 4"><path d="M0 0L3.500 4 7 0z" fill="#444" /></svg>
              </ScrollBar>
            </Viewport>
          </Frame>
          <Footer><Check />Top</Footer>
        </WinBody>
      </Win>
    </Desktop>
  );
}
